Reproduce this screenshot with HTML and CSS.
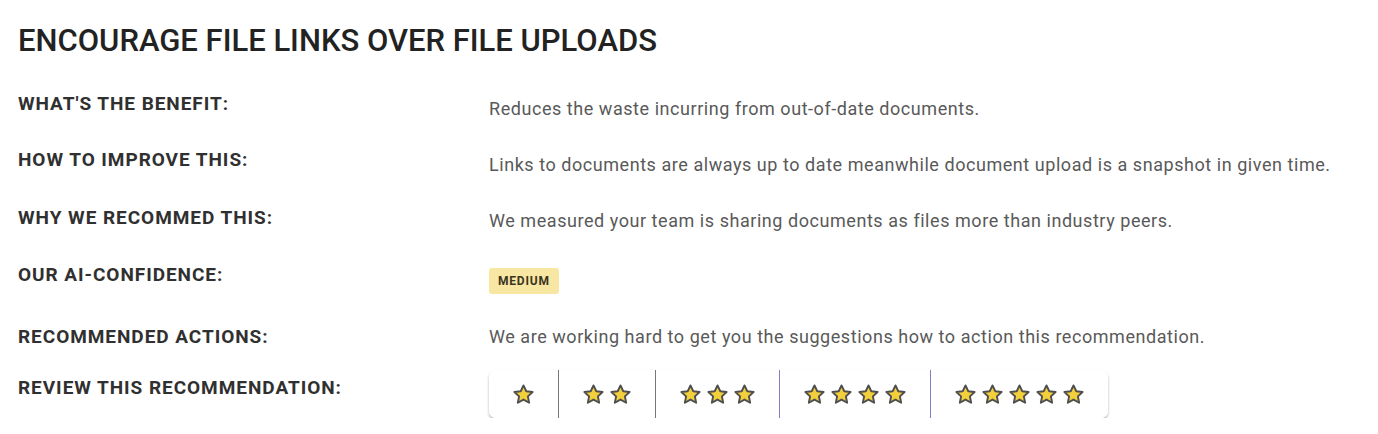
FILE: index.html
```html
<!DOCTYPE html>
<html lang="en">
<head>
<meta charset="utf-8">
<title>Recommendation</title>
<link rel="stylesheet" href="styles.css">
</head>
<body>
<main class="card">
  <h1 class="title">ENCOURAGE FILE LINKS OVER FILE UPLOADS</h1>
  <div class="rows">
    <div class="row r1">
      <div class="label">WHAT'S THE BENEFIT:</div>
      <div class="value">Reduces the waste incurring from out-of-date documents.</div>
    </div>
    <div class="row r2">
      <div class="label">HOW TO IMPROVE THIS:</div>
      <div class="value">Links to documents are always up to date meanwhile document upload is a snapshot in given time.</div>
    </div>
    <div class="row r3">
      <div class="label">WHY WE RECOMMED THIS:</div>
      <div class="value">We measured your team is sharing documents as files more than industry peers.</div>
    </div>
    <div class="row r4">
      <div class="label">OUR AI-CONFIDENCE:</div>
      <div class="value"><span class="badge">MEDIUM</span></div>
    </div>
    <div class="row r5">
      <div class="label">RECOMMENDED ACTIONS:</div>
      <div class="value">We are working hard to get you the suggestions how to action this recommendation.</div>
    </div>
    <div class="row r6">
      <div class="label">REVIEW THIS RECOMMENDATION:</div>
      <div class="value">
        <div class="rating">
          <button class="seg" aria-label="1 star">
            <svg class="star" viewBox="0 0 24 24"><path d="M12 2.5l2.9 6.1 6.6.8-4.9 4.6 1.3 6.6L12 17.3l-5.9 3.3 1.3-6.6-4.9-4.6 6.6-.8z"/></svg>
          </button>
          <button class="seg" aria-label="2 stars">
            <svg class="star" viewBox="0 0 24 24"><path d="M12 2.5l2.9 6.1 6.6.8-4.9 4.6 1.3 6.6L12 17.3l-5.9 3.3 1.3-6.6-4.9-4.6 6.6-.8z"/></svg>
            <svg class="star" viewBox="0 0 24 24"><path d="M12 2.5l2.9 6.1 6.6.8-4.9 4.6 1.3 6.6L12 17.3l-5.9 3.3 1.3-6.6-4.9-4.6 6.6-.8z"/></svg>
          </button>
          <button class="seg" aria-label="3 stars">
            <svg class="star" viewBox="0 0 24 24"><path d="M12 2.5l2.9 6.1 6.6.8-4.9 4.6 1.3 6.6L12 17.3l-5.9 3.3 1.3-6.6-4.9-4.6 6.6-.8z"/></svg>
            <svg class="star" viewBox="0 0 24 24"><path d="M12 2.5l2.9 6.1 6.6.8-4.9 4.6 1.3 6.6L12 17.3l-5.9 3.3 1.3-6.6-4.9-4.6 6.6-.8z"/></svg>
            <svg class="star" viewBox="0 0 24 24"><path d="M12 2.5l2.9 6.1 6.6.8-4.9 4.6 1.3 6.6L12 17.3l-5.9 3.3 1.3-6.6-4.9-4.6 6.6-.8z"/></svg>
          </button>
          <button class="seg seg-blue" aria-label="4 stars">
            <svg class="star" viewBox="0 0 24 24"><path d="M12 2.5l2.9 6.1 6.6.8-4.9 4.6 1.3 6.6L12 17.3l-5.9 3.3 1.3-6.6-4.9-4.6 6.6-.8z"/></svg>
            <svg class="star" viewBox="0 0 24 24"><path d="M12 2.5l2.9 6.1 6.6.8-4.9 4.6 1.3 6.6L12 17.3l-5.9 3.3 1.3-6.6-4.9-4.6 6.6-.8z"/></svg>
            <svg class="star" viewBox="0 0 24 24"><path d="M12 2.5l2.9 6.1 6.6.8-4.9 4.6 1.3 6.6L12 17.3l-5.9 3.3 1.3-6.6-4.9-4.6 6.6-.8z"/></svg>
            <svg class="star" viewBox="0 0 24 24"><path d="M12 2.5l2.9 6.1 6.6.8-4.9 4.6 1.3 6.6L12 17.3l-5.9 3.3 1.3-6.6-4.9-4.6 6.6-.8z"/></svg>
          </button>
          <button class="seg seg-blue" aria-label="5 stars">
            <svg class="star" viewBox="0 0 24 24"><path d="M12 2.5l2.9 6.1 6.6.8-4.9 4.6 1.3 6.6L12 17.3l-5.9 3.3 1.3-6.6-4.9-4.6 6.6-.8z"/></svg>
            <svg class="star" viewBox="0 0 24 24"><path d="M12 2.5l2.9 6.1 6.6.8-4.9 4.6 1.3 6.6L12 17.3l-5.9 3.3 1.3-6.6-4.9-4.6 6.6-.8z"/></svg>
            <svg class="star" viewBox="0 0 24 24"><path d="M12 2.5l2.9 6.1 6.6.8-4.9 4.6 1.3 6.6L12 17.3l-5.9 3.3 1.3-6.6-4.9-4.6 6.6-.8z"/></svg>
            <svg class="star" viewBox="0 0 24 24"><path d="M12 2.5l2.9 6.1 6.6.8-4.9 4.6 1.3 6.6L12 17.3l-5.9 3.3 1.3-6.6-4.9-4.6 6.6-.8z"/></svg>
            <svg class="star" viewBox="0 0 24 24"><path d="M12 2.5l2.9 6.1 6.6.8-4.9 4.6 1.3 6.6L12 17.3l-5.9 3.3 1.3-6.6-4.9-4.6 6.6-.8z"/></svg>
          </button>
        </div>
      </div>
    </div>
  </div>
</main>
</body>
</html>
```

FILE: styles.css
```css
* { box-sizing: border-box; }

html, body {
  margin: 0;
  padding: 0;
  background: #ffffff;
}

body {
  font-family: Roboto, "Liberation Sans", Arial, sans-serif;
  color: #222;
}

.card {
  padding: 23px 18px 0 18px;
}

.title {
  margin: 0;
  font-size: 31px;
  line-height: 36px;
  font-weight: 500;
  color: #222;
  letter-spacing: 0;
}

.rows {
  margin-top: 33px;
  display: flex;
  flex-direction: column;
}

.row {
  display: flex;
  align-items: flex-start;
}

.label {
  width: 471px;
  flex: none;
  font-size: 19px;
  line-height: 24px;
  font-weight: 700;
  letter-spacing: 0.95px;
  color: #303030;
}

.value {
  font-size: 18px;
  line-height: 24px;
  color: #595959;
  letter-spacing: 0.55px;
}

.r1 { height: 56px; }
.r1 .value { padding-top: 5px; }
.r2 { height: 58px; }
.r2 .value { padding-top: 5px; }
.r3 { height: 57px; }
.r3 .value { padding-top: 3px; }
.r4 { height: 62px; }
.r4 .value { padding-top: 5px; }
.r5 { height: 51px; }
.r6 .value { margin-top: -6px; }

.badge {
  display: inline-block;
  padding: 0 9px;
  height: 26px;
  line-height: 26px;
  background: #f8e6a3;
  border-radius: 3px;
  font-size: 12px;
  font-weight: 700;
  color: #3b3520;
  letter-spacing: 0.8px;
  vertical-align: top;
}

.rating {
  display: inline-flex;
  height: 48px;
  background: #fff;
  border-radius: 7px;
  box-shadow: 0 2px 3px rgba(0, 0, 0, 0.28), 0 0 1px rgba(0, 0, 0, 0.06);
  overflow: hidden;
}

.seg {
  display: flex;
  align-items: center;
  gap: 4px;
  padding: 0 23px;
  margin: 0;
  border: 0;
  border-left: 1px solid #777;
  background: #fff;
  font: inherit;
  cursor: pointer;
}

.seg:first-child { border-left: 0; }

.seg-blue { border-left-color: #7f80c8; }

.star {
  width: 23px;
  height: 23px;
  display: block;
}

.star path {
  fill: #f3cf3b;
  stroke: #4f4f4f;
  stroke-width: 2;
  stroke-linejoin: round;
}
```
